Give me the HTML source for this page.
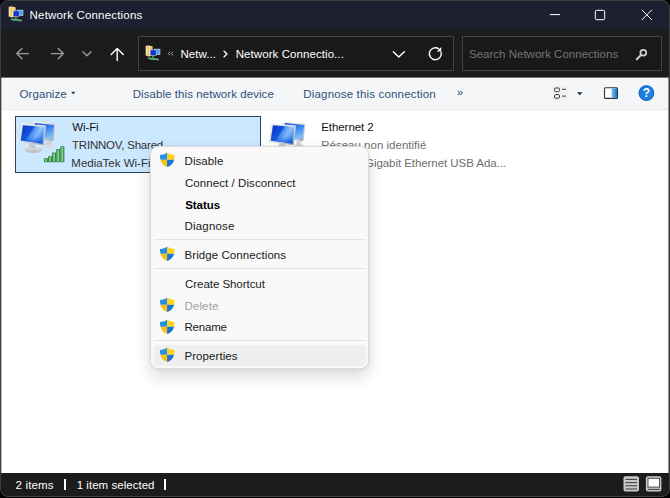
<!DOCTYPE html>
<html><head><meta charset="utf-8"><title>Network Connections</title>
<style>
*{margin:0;padding:0;box-sizing:border-box}
html,body{width:670px;height:498px;overflow:hidden;background:#000}
body{font-family:"Liberation Sans",sans-serif;position:relative;font-size:12px}
.abs{position:absolute}
.t{position:absolute;white-space:nowrap;line-height:16px;height:16px;font-size:12px}
#win{left:0;top:0;width:669.5px;height:496.5px;border-radius:8px;overflow:hidden;background:#1c1c1c}
#frame{left:0;top:0;width:669.5px;height:496.5px;border-radius:8px;border:1px solid #3e3e3e;pointer-events:none}
#title{left:0;top:0;width:670px;height:29px;background:#1c2030}
#nav{left:0;top:29px;width:670px;height:49px;background:#1c1c1c}
#tool{left:1px;top:77px;width:668px;height:32.5px;background:#f5f6f8;border-bottom:1px solid #e8e9eb}
#content{left:1px;top:109.5px;width:668px;height:363.5px;background:#fff}
#status{left:0;top:473px;width:670px;height:24px;background:#1c1c1c}
#addr{left:138px;top:36px;width:316px;height:35px;border:1px solid #454545;background:#191919}
#search{left:462px;top:36px;width:200px;height:35px;border:1px solid #454545;background:#191919}
#sel{left:15px;top:116px;width:246px;height:57px;background:#cce8ff;border:1px solid #2b4560}
#menu{left:150px;top:146px;width:219px;height:223px;background:#f9f9f9;border-radius:8px;border:1px solid #dcdcdc;box-shadow:0 8px 16px rgba(0,0,0,.14),0 0 3px rgba(0,0,0,.10)}
.sep{position:absolute;left:153.5px;width:212.5px;height:1px;background:#e4e4e4}
#hl{left:153.5px;top:345px;width:212.5px;height:21px;background:#efefef;border-radius:4px}
.bar{position:absolute;width:1.5px;height:11px;top:479px;background:#fff}
</style></head><body>
<div id="win" class="abs">
<div id="title" class="abs"></div>
<div id="nav" class="abs"></div>
<div id="tool" class="abs"></div>
<div id="content" class="abs"></div>
<div id="status" class="abs"></div>
<div class="abs" style="left:1px;top:77px;width:1px;height:396px;background:rgba(28,28,28,.3)"></div>
<div class="abs" style="left:668px;top:77px;width:1px;height:396px;background:rgba(28,28,28,.5)"></div>
<div class="abs" style="left:1px;top:77px;width:668px;height:1px;background:rgba(28,28,28,.6)"></div>

<svg class="abs" style="left:8px;top:6px" width="16" height="16" viewBox="0 0 16 16">
<path d="M0.7 0.8 L3.6 0.4 L7.4 1.2 L7.4 10.6 L3.6 11.4 L0.7 10.6Z" fill="#f8e7a4"/>
<path d="M2.6 0.8 L3.8 0.6 L3.8 11.2 L2.6 11Z" fill="#e3b44c"/>
<path d="M5.2 1 L7.4 1.4 L7.4 10.6 L5.2 11Z" fill="#eac467"/>
<rect x="9" y="3.8" width="6.3" height="6" fill="#b9cde6"/>
<rect x="9.8" y="4.6" width="4.8" height="4.2" fill="#4f9bee"/>
<rect x="5" y="4.6" width="6.4" height="6.2" fill="#9fb7d8"/>
<rect x="5.6" y="5.2" width="5.2" height="5" fill="#1136c9"/>
<path d="M3 13.2 L14 14.6" stroke="#8a9199" stroke-width="1.6"/>
<path d="M5 13.5 L11 14.2" stroke="#3fb560" stroke-width="1.8"/>
<path d="M8 11 L8 13.6" stroke="#3fb560" stroke-width="1.4"/>
</svg>
<svg class="abs" style="left:540px;top:0" width="130" height="29" viewBox="540 0 130 29" fill="none" stroke="#fff" stroke-width="1">
<path d="M549.8 14.6 H560"/>
<rect x="595.3" y="10.3" width="9.4" height="9.4" rx="1.6"/>
<path d="M641.8 9.8 L651.9 20 M651.9 9.8 L641.8 20"/>
</svg>
<div id="addr" class="abs"></div><div id="search" class="abs"></div>
<svg class="abs" style="left:0;top:29px" width="670" height="49" viewBox="0 29 670 49" fill="none" stroke-linecap="round" stroke-linejoin="round">
<g stroke="#9c9c9c" stroke-width="1.4">
<path d="M28.4 53.6 H16.9 M22 48.4 L16.8 53.6 L22 58.8"/>
<path d="M51.4 53.6 H63.3 M58.2 48.4 L63.4 53.6 L58.2 58.8"/>
<path d="M82.8 51.8 L86.9 55.8 L91 51.8"/>
</g>
<g stroke="#fff" stroke-width="1.5">
<path d="M117.2 60.6 V48.8 M111.2 54.6 L117.2 48.6 L123.2 54.6" stroke-width="1.4"/>
<path d="M224.1 51.2 L227 54 L224.1 56.8" stroke-width="1.4"/>
<path d="M393.3 51.8 L398.8 57.1 L404.3 51.8" stroke-width="1.4"/>
<path d="M441.1 52.2 A6 6 0 1 1 438.6 48.7" stroke-width="1.4"/>
</g>
<path d="M441.2 47 V51.4 H436.8Z" fill="#fff"/>
<g stroke="#b0b0b0" stroke-width="1">
<path d="M169.8 52 L168.3 53.5 L169.8 55 M172.8 52 L171.3 53.5 L172.8 55"/>
</g>
<g stroke="#cfcfcf" stroke-width="1.7">
<circle cx="643.3" cy="52.7" r="2.9"/>
<path d="M641 55 L636.8 59.2" stroke-width="2"/>
</g>
</svg>
<svg class="abs" style="left:145px;top:44.5px" width="16" height="16" viewBox="0 0 16 16">
<path d="M0.7 0.8 L3.6 0.4 L7.4 1.2 L7.4 10.6 L3.6 11.4 L0.7 10.6Z" fill="#f8e7a4"/>
<path d="M2.6 0.8 L3.8 0.6 L3.8 11.2 L2.6 11Z" fill="#e3b44c"/>
<path d="M5.2 1 L7.4 1.4 L7.4 10.6 L5.2 11Z" fill="#eac467"/>
<rect x="9" y="3.8" width="6.3" height="6" fill="#b9cde6"/>
<rect x="9.8" y="4.6" width="4.8" height="4.2" fill="#4f9bee"/>
<rect x="5" y="4.6" width="6.4" height="6.2" fill="#9fb7d8"/>
<rect x="5.6" y="5.2" width="5.2" height="5" fill="#1136c9"/>
<path d="M3 13.2 L14 14.6" stroke="#8a9199" stroke-width="1.6"/>
<path d="M5 13.5 L11 14.2" stroke="#3fb560" stroke-width="1.8"/>
<path d="M8 11 L8 13.6" stroke="#3fb560" stroke-width="1.4"/>
</svg>
<svg class="abs" style="left:0;top:78px" width="670" height="32" viewBox="0 78 670 32">
<path d="M71.2 91.8 H75.4 L73.3 94.6Z" fill="#2c3e57"/>
<rect x="552.5" y="85.5" width="15" height="15" rx="2" fill="#eef0f2"/>
<g fill="none" stroke="#3a3a3a" stroke-width="1"><rect x="554.5" y="88" width="5" height="3.6" rx="1.2"/><rect x="554.5" y="94.6" width="5" height="3.6" rx="1.2"/><path d="M562 89.3 H566 M562 96.1 H566"/></g>
<path d="M577 92.2 H582.4 L579.7 95.2Z" fill="#1f2a3a"/>
<defs><linearGradient id="pg" x1="0" y1="0" x2="1" y2="0"><stop offset="0" stop-color="#7cc0f5"/><stop offset="1" stop-color="#1373d6"/></linearGradient></defs>
<rect x="604.5" y="87.8" width="13" height="10.6" rx="1" fill="#fff" stroke="#333" stroke-width="1.1"/>
<rect x="611.6" y="88.4" width="5.4" height="9.4" fill="url(#pg)"/>
<circle cx="646.4" cy="93.1" r="7.8" fill="#1a80dc"/>
<circle cx="646.4" cy="93.1" r="7.3" fill="none" stroke="#0f63b8" stroke-width="0.8"/>
<text x="646.4" y="97.4" font-family="Liberation Sans, sans-serif" font-size="12" font-weight="bold" fill="#fff" text-anchor="middle">?</text>
</svg>
<span class="t" style="left:457px;top:84px;color:#2c4a75;font-size:11px">»</span>
<div id="sel" class="abs"></div>
<svg class="abs" style="left:16px;top:119px" width="52" height="46" viewBox="0 0 52 46">
<defs>
<linearGradient id="scrA16" x1="0" y1="0.1" x2="1" y2="0.6"><stop offset="0" stop-color="#0b35c6"/><stop offset="0.42" stop-color="#1350dc"/><stop offset="0.5" stop-color="#4f9af4"/><stop offset="0.72" stop-color="#9fd0fc"/><stop offset="1" stop-color="#3f8ef2"/></linearGradient>
<linearGradient id="scrA216" x1="0" y1="0" x2="0" y2="1"><stop offset="0" stop-color="#0b35c6" stop-opacity="0"/><stop offset="0.6" stop-color="#1a62e6" stop-opacity="0.25"/><stop offset="1" stop-color="#0d47d8" stop-opacity="0.85"/></linearGradient>
<linearGradient id="scrB16" x1="0" y1="0" x2="0.4" y2="1"><stop offset="0" stop-color="#0f3fd0"/><stop offset="0.5" stop-color="#3b86f0"/><stop offset="1" stop-color="#7fbcf9"/></linearGradient>
<linearGradient id="fr16" x1="0" y1="0" x2="1" y2="1"><stop offset="0" stop-color="#f2f4f7"/><stop offset="0.6" stop-color="#cfd4db"/><stop offset="1" stop-color="#9aa3af"/></linearGradient>
<linearGradient id="bs16" x1="0" y1="0" x2="0" y2="1"><stop offset="0" stop-color="#f4f5f7"/><stop offset="1" stop-color="#b4bac3"/></linearGradient>
<linearGradient id="gb16" x1="0" y1="0" x2="1" y2="0"><stop offset="0" stop-color="#3c9a50"/><stop offset="0.45" stop-color="#a8e0b0"/><stop offset="1" stop-color="#3c9a50"/></linearGradient>
</defs>
<!-- back monitor -->
<ellipse cx="33" cy="27" rx="4.6" ry="1.9" fill="#d9dde3"/><path d="M30.5 22 L35 22.6 L35.2 26.4 L30.2 26Z" fill="#ccd1d8"/>
<path d="M17.5 3.6 Q17.6 2.6 18.6 2.7 L38.5 4.4 Q39.5 4.5 39.4 5.5 L37.4 21.3 Q37.2 22.4 36.2 22.2 L19 19.6Z" fill="url(#fr16)"/>
<path d="M18.6 4.1 L38.2 5.9 L36.2 20.6 L19.5 18Z" fill="url(#scrB16)"/>
<!-- front stand -->
<ellipse cx="17.4" cy="30.1" rx="8.9" ry="4.2" fill="#bfc5cd"/>
<ellipse cx="17.4" cy="29.4" rx="8.7" ry="3.8" fill="url(#bs16)"/>
<path d="M13 24 L19.5 25.4 L19.8 28.8 Q16.6 29.8 12.6 28.2Z" fill="#c4cad2"/>
<!-- front monitor -->
<path d="M5.2 5.4 Q5.4 4.3 6.4 4.5 L29 6.3 Q30 6.5 29.9 7.5 L28 25.4 Q27.8 26.5 26.8 26.3 L4.2 23.1 Q3.1 22.9 3.3 21.9Z" fill="url(#fr16)"/>
<path d="M6.9 6.2 L28.3 8 L26.4 24.7 L4.8 21.6Z" fill="url(#scrA16)"/>
<path d="M6.9 6.2 L28.3 8 L26.4 24.7 L4.8 21.6Z" fill="url(#scrA216)"/>
<rect x="27.9" y="39.3" width="4.1" height="3.9" rx="0.7" fill="#2f8743"/><rect x="28.7" y="40.1" width="2.5" height="2.3" rx="0.4" fill="url(#gb16)"/><rect x="32.0" y="37.2" width="4.1" height="6.0" rx="0.7" fill="#2f8743"/><rect x="32.8" y="38.0" width="2.5" height="4.4" rx="0.4" fill="url(#gb16)"/><rect x="36.1" y="33.4" width="4.1" height="9.8" rx="0.7" fill="#2f8743"/><rect x="36.9" y="34.2" width="2.5" height="8.2" rx="0.4" fill="url(#gb16)"/><rect x="40.2" y="30.0" width="4.1" height="13.2" rx="0.7" fill="#2f8743"/><rect x="41.0" y="30.8" width="2.5" height="11.6" rx="0.4" fill="url(#gb16)"/><rect x="44.3" y="27.3" width="4.1" height="15.9" rx="0.7" fill="#2f8743"/><rect x="45.1" y="28.1" width="2.5" height="14.3" rx="0.4" fill="url(#gb16)"/></svg>
<svg class="abs" style="left:266px;top:119px" width="52" height="46" viewBox="0 0 52 46">
<defs>
<linearGradient id="scrA266" x1="0" y1="0.1" x2="1" y2="0.6"><stop offset="0" stop-color="#0b35c6"/><stop offset="0.42" stop-color="#1350dc"/><stop offset="0.5" stop-color="#4f9af4"/><stop offset="0.72" stop-color="#9fd0fc"/><stop offset="1" stop-color="#3f8ef2"/></linearGradient>
<linearGradient id="scrA2266" x1="0" y1="0" x2="0" y2="1"><stop offset="0" stop-color="#0b35c6" stop-opacity="0"/><stop offset="0.6" stop-color="#1a62e6" stop-opacity="0.25"/><stop offset="1" stop-color="#0d47d8" stop-opacity="0.85"/></linearGradient>
<linearGradient id="scrB266" x1="0" y1="0" x2="0.4" y2="1"><stop offset="0" stop-color="#0f3fd0"/><stop offset="0.5" stop-color="#3b86f0"/><stop offset="1" stop-color="#7fbcf9"/></linearGradient>
<linearGradient id="fr266" x1="0" y1="0" x2="1" y2="1"><stop offset="0" stop-color="#f2f4f7"/><stop offset="0.6" stop-color="#cfd4db"/><stop offset="1" stop-color="#9aa3af"/></linearGradient>
<linearGradient id="bs266" x1="0" y1="0" x2="0" y2="1"><stop offset="0" stop-color="#f4f5f7"/><stop offset="1" stop-color="#b4bac3"/></linearGradient>
<linearGradient id="gb266" x1="0" y1="0" x2="1" y2="0"><stop offset="0" stop-color="#3c9a50"/><stop offset="0.45" stop-color="#a8e0b0"/><stop offset="1" stop-color="#3c9a50"/></linearGradient>
</defs>
<!-- back monitor -->
<ellipse cx="33" cy="27" rx="4.6" ry="1.9" fill="#d9dde3"/><path d="M30.5 22 L35 22.6 L35.2 26.4 L30.2 26Z" fill="#ccd1d8"/>
<path d="M17.5 3.6 Q17.6 2.6 18.6 2.7 L38.5 4.4 Q39.5 4.5 39.4 5.5 L37.4 21.3 Q37.2 22.4 36.2 22.2 L19 19.6Z" fill="url(#fr266)"/>
<path d="M18.6 4.1 L38.2 5.9 L36.2 20.6 L19.5 18Z" fill="url(#scrB266)"/>
<!-- front stand -->
<ellipse cx="17.4" cy="30.1" rx="8.9" ry="4.2" fill="#bfc5cd"/>
<ellipse cx="17.4" cy="29.4" rx="8.7" ry="3.8" fill="url(#bs266)"/>
<path d="M13 24 L19.5 25.4 L19.8 28.8 Q16.6 29.8 12.6 28.2Z" fill="#c4cad2"/>
<!-- front monitor -->
<path d="M5.2 5.4 Q5.4 4.3 6.4 4.5 L29 6.3 Q30 6.5 29.9 7.5 L28 25.4 Q27.8 26.5 26.8 26.3 L4.2 23.1 Q3.1 22.9 3.3 21.9Z" fill="url(#fr266)"/>
<path d="M6.9 6.2 L28.3 8 L26.4 24.7 L4.8 21.6Z" fill="url(#scrA266)"/>
<path d="M6.9 6.2 L28.3 8 L26.4 24.7 L4.8 21.6Z" fill="url(#scrA2266)"/>
</svg>
<span class="t" style="left:29.6px;top:7px;color:#ffffff;font-size:11.5px;letter-spacing:0.186px">Network Connections</span>
<span class="t" style="left:180.5px;top:46px;color:#ffffff;font-size:11.5px;letter-spacing:0.042px">Netw...</span>
<span class="t" style="left:235.7px;top:46px;color:#ffffff;font-size:11.5px;letter-spacing:0.074px">Network Connectio...</span>
<span class="t" style="left:469.0px;top:46px;color:#747474;font-size:11.5px;letter-spacing:0.008px">Search Network Connections</span>
<span class="t" style="left:19.5px;top:86px;color:#30507c;font-size:11.5px;letter-spacing:0.079px">Organize</span>
<span class="t" style="left:132.7px;top:86px;color:#30507c;font-size:11.5px;letter-spacing:0.069px">Disable this network device</span>
<span class="t" style="left:303.3px;top:86px;color:#30507c;font-size:11.5px;letter-spacing:0.170px">Diagnose this connection</span>
<span class="t" style="left:72.3px;top:119px;color:#111111;font-size:11.5px;letter-spacing:-0.112px">Wi-Fi</span>
<span class="t" style="left:72.0px;top:137px;color:#333333;font-size:11.5px;letter-spacing:-0.207px">TRINNOV, Shared</span>
<span class="t" style="left:71.3px;top:155px;color:#333333;font-size:11.5px;letter-spacing:0.000px">MediaTek Wi-Fi</span>
<span class="t" style="left:321.2px;top:119px;color:#111111;font-size:11.5px;letter-spacing:-0.056px">Ethernet 2</span>
<span class="t" style="left:321.2px;top:137px;color:#6e6e6e;font-size:11.5px;letter-spacing:0.013px">Réseau non identifié</span>
<span class="t" style="left:365.0px;top:155px;color:#6e6e6e;font-size:11.5px;letter-spacing:-0.058px">Gigabit Ethernet USB Ada...</span>
<div id="menu" class="abs"></div><div id="hl" class="abs"></div>
<div class="sep" style="top:239px"></div>
<div class="sep" style="top:268px"></div>
<div class="sep" style="top:340px"></div>
<svg class="abs" style="left:159px;top:152px" width="17" height="16" viewBox="0 0 17 16">
<defs><clipPath id="sh152"><path d="M8.3 0.5 C6.5 1.9 4 2.8 1 2.9 C0.8 8.6 2.9 12.9 8.3 15.1 C13.7 12.9 15.8 8.6 15.6 2.9 C12.6 2.8 10.1 1.9 8.3 0.5Z"/></clipPath></defs>
<g clip-path="url(#sh152)"><rect x="0" y="0" width="8.1" height="7.8" fill="#2590e4"/><rect x="8.1" y="0" width="9" height="7.8" fill="#ffd21f"/><rect x="0" y="7.8" width="8.1" height="9" fill="#fcc012"/><rect x="8.1" y="7.8" width="9" height="9" fill="#1676d6"/></g></svg>
<svg class="abs" style="left:159px;top:246px" width="17" height="16" viewBox="0 0 17 16">
<defs><clipPath id="sh246"><path d="M8.3 0.5 C6.5 1.9 4 2.8 1 2.9 C0.8 8.6 2.9 12.9 8.3 15.1 C13.7 12.9 15.8 8.6 15.6 2.9 C12.6 2.8 10.1 1.9 8.3 0.5Z"/></clipPath></defs>
<g clip-path="url(#sh246)"><rect x="0" y="0" width="8.1" height="7.8" fill="#2590e4"/><rect x="8.1" y="0" width="9" height="7.8" fill="#ffd21f"/><rect x="0" y="7.8" width="8.1" height="9" fill="#fcc012"/><rect x="8.1" y="7.8" width="9" height="9" fill="#1676d6"/></g></svg>
<svg class="abs" style="left:159px;top:297px" width="17" height="16" viewBox="0 0 17 16">
<defs><clipPath id="sh297"><path d="M8.3 0.5 C6.5 1.9 4 2.8 1 2.9 C0.8 8.6 2.9 12.9 8.3 15.1 C13.7 12.9 15.8 8.6 15.6 2.9 C12.6 2.8 10.1 1.9 8.3 0.5Z"/></clipPath></defs>
<g clip-path="url(#sh297)"><rect x="0" y="0" width="8.1" height="7.8" fill="#2590e4"/><rect x="8.1" y="0" width="9" height="7.8" fill="#ffd21f"/><rect x="0" y="7.8" width="8.1" height="9" fill="#fcc012"/><rect x="8.1" y="7.8" width="9" height="9" fill="#1676d6"/></g></svg>
<svg class="abs" style="left:159px;top:318.5px" width="17" height="16" viewBox="0 0 17 16">
<defs><clipPath id="sh318"><path d="M8.3 0.5 C6.5 1.9 4 2.8 1 2.9 C0.8 8.6 2.9 12.9 8.3 15.1 C13.7 12.9 15.8 8.6 15.6 2.9 C12.6 2.8 10.1 1.9 8.3 0.5Z"/></clipPath></defs>
<g clip-path="url(#sh318)"><rect x="0" y="0" width="8.1" height="7.8" fill="#2590e4"/><rect x="8.1" y="0" width="9" height="7.8" fill="#ffd21f"/><rect x="0" y="7.8" width="8.1" height="9" fill="#fcc012"/><rect x="8.1" y="7.8" width="9" height="9" fill="#1676d6"/></g></svg>
<svg class="abs" style="left:159px;top:347px" width="17" height="16" viewBox="0 0 17 16">
<defs><clipPath id="sh347"><path d="M8.3 0.5 C6.5 1.9 4 2.8 1 2.9 C0.8 8.6 2.9 12.9 8.3 15.1 C13.7 12.9 15.8 8.6 15.6 2.9 C12.6 2.8 10.1 1.9 8.3 0.5Z"/></clipPath></defs>
<g clip-path="url(#sh347)"><rect x="0" y="0" width="8.1" height="7.8" fill="#2590e4"/><rect x="8.1" y="0" width="9" height="7.8" fill="#ffd21f"/><rect x="0" y="7.8" width="8.1" height="9" fill="#fcc012"/><rect x="8.1" y="7.8" width="9" height="9" fill="#1676d6"/></g></svg>
<span class="t" style="left:184.5px;top:153px;color:#1a1a1a;font-size:11.5px;letter-spacing:0.075px">Disable</span>
<span class="t" style="left:185.0px;top:175px;color:#1a1a1a;font-size:11.5px;letter-spacing:0.066px">Connect / Disconnect</span>
<span class="t" style="left:185.2px;top:197px;color:#000000;font-size:11.5px;letter-spacing:-0.040px;font-weight:bold">Status</span>
<span class="t" style="left:184.5px;top:218px;color:#1a1a1a;font-size:11.5px;letter-spacing:0.193px">Diagnose</span>
<span class="t" style="left:184.5px;top:247px;color:#1a1a1a;font-size:11.5px;letter-spacing:0.071px">Bridge Connections</span>
<span class="t" style="left:185.0px;top:276px;color:#1a1a1a;font-size:11.5px;letter-spacing:-0.046px">Create Shortcut</span>
<span class="t" style="left:184.5px;top:298px;color:#a3a3a3;font-size:11.5px;letter-spacing:0.120px">Delete</span>
<span class="t" style="left:184.5px;top:319px;color:#1a1a1a;font-size:11.5px;letter-spacing:-0.200px">Rename</span>
<span class="t" style="left:184.5px;top:348px;color:#1a1a1a;font-size:11.5px;letter-spacing:0.061px">Properties</span>
<span class="t" style="left:15.6px;top:477px;color:#ffffff;font-size:11.5px;letter-spacing:0.150px">2 items</span>
<span class="t" style="left:76.7px;top:477px;color:#ffffff;font-size:11.5px;letter-spacing:0.032px">1 item selected</span>
<div class="bar" style="left:64px"></div><div class="bar" style="left:164.3px"></div>
<svg class="abs" style="left:618px;top:473px" width="52" height="24" viewBox="618 473 52 24">
<rect x="623.5" y="476.3" width="15.5" height="15.2" rx="2" fill="#c9c9c9"/>
<g stroke="#3a3a3a" stroke-width="1"><path d="M625.4 479.4 H637.2 M625.4 482.6 H637.2 M625.4 485.8 H637.2 M625.4 489 H637.2"/></g>
<rect x="645.9" y="476.3" width="15.5" height="15.2" rx="2" fill="#c9c9c9"/>
<rect x="648" y="478.3" width="11.6" height="8.8" fill="#fff" stroke="#3a3a3a" stroke-width="0.9"/>
<path d="M647.8 489.4 H659.8" stroke="#3a3a3a" stroke-width="1"/>
</svg>
<div id="frame" class="abs"></div>
</div>
</body></html>
